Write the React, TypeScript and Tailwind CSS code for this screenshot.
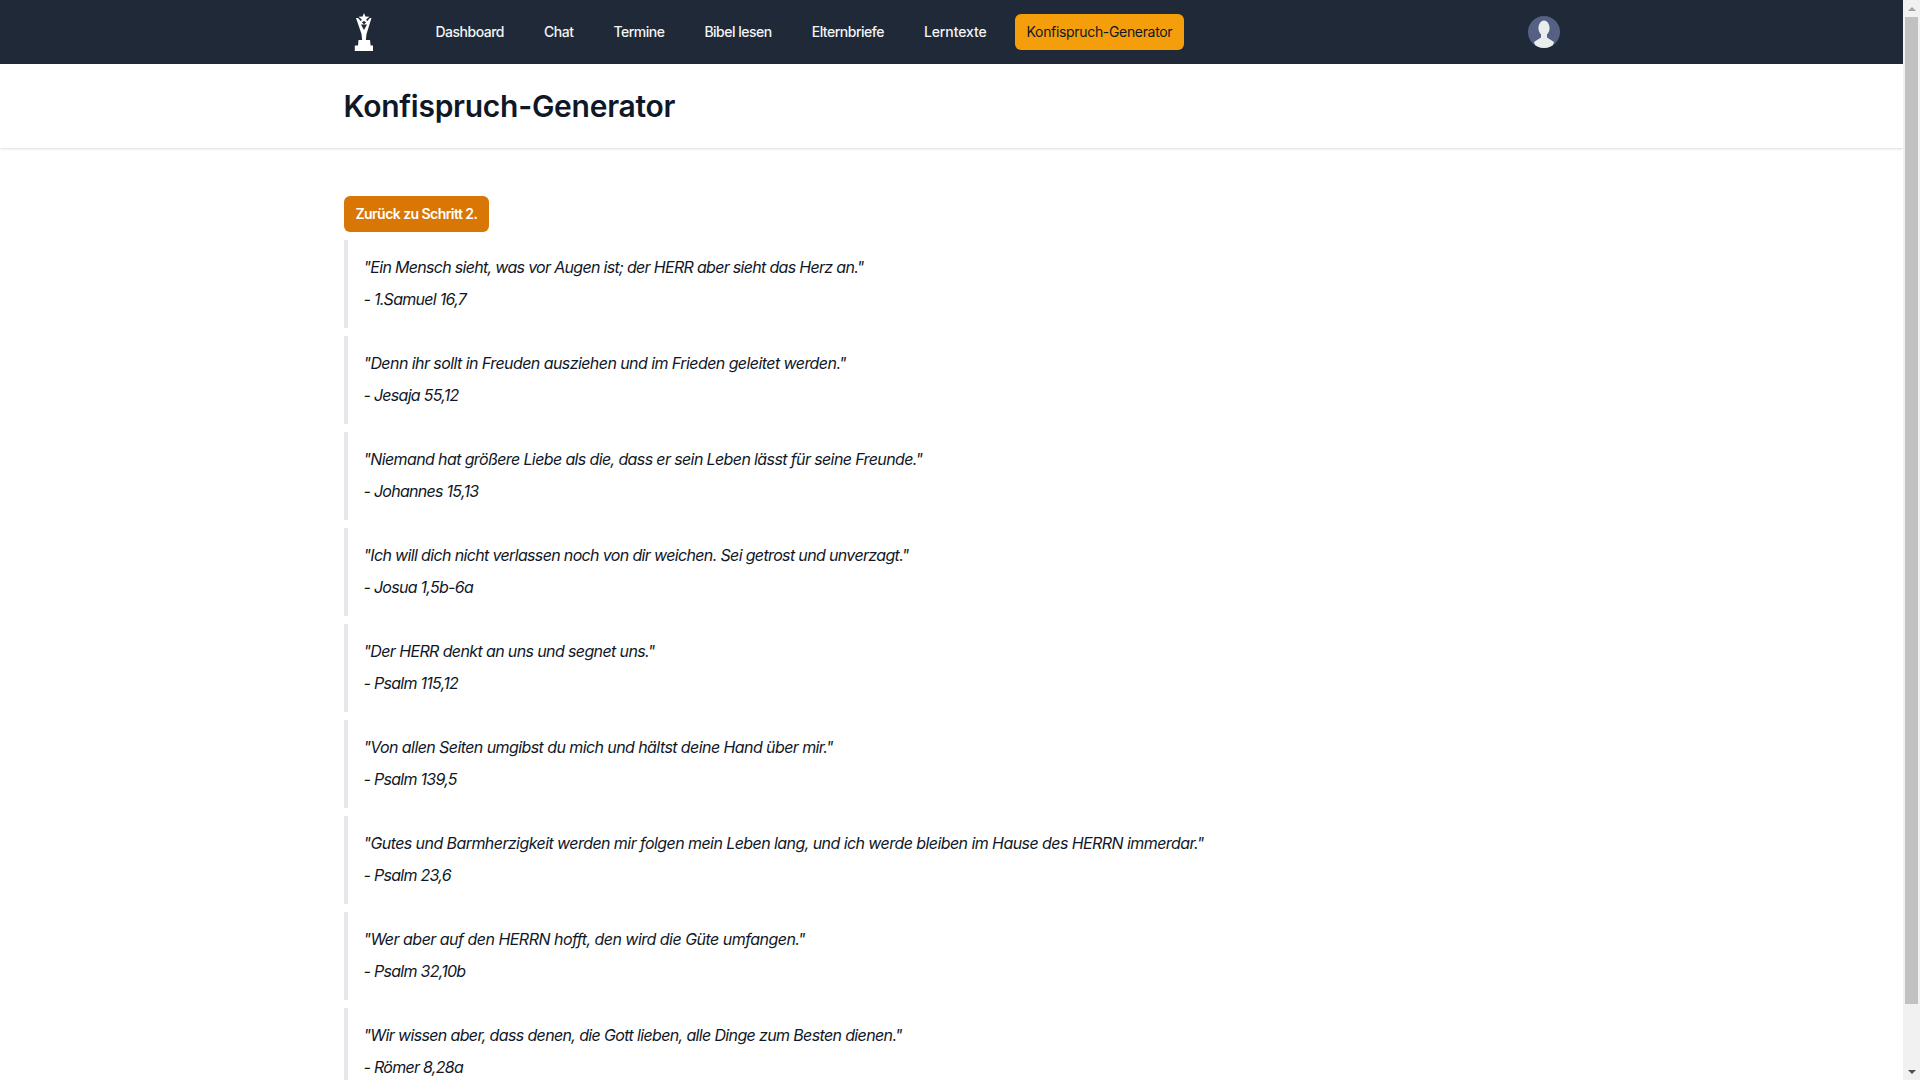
import React from 'react';

const links = [
  { label: 'Dashboard', className: 'text-gray-100 font-medium tracking-[-0.5px]' },
  { label: 'Chat', className: 'text-gray-100 font-medium tracking-[-0.5px]' },
  { label: 'Termine', className: 'text-gray-100 font-medium tracking-[-0.5px]' },
  { label: 'Bibel lesen', className: 'text-gray-100 font-medium tracking-[-0.5px]' },
  { label: 'Elternbriefe', className: 'text-gray-100 font-medium tracking-[-0.5px]' },
  { label: 'Lerntexte', className: 'text-gray-100 font-medium tracking-[-0.1px]' },
  { label: 'Konfispruch-Generator', className: 'bg-[#f59e0b] text-[#111827] font-normal tracking-[-0.33px]' },
];

const verses = [
  { text: '"Ein Mensch sieht, was vor Augen ist; der HERR aber sieht das Herz an."', ref: '- 1.Samuel 16,7', tracking: 'tracking-[-0.69px]' },
  { text: '"Denn ihr sollt in Freuden ausziehen und im Frieden geleitet werden."', ref: '- Jesaja 55,12', tracking: 'tracking-[-0.57px]' },
  { text: '"Niemand hat größere Liebe als die, dass er sein Leben lässt für seine Freunde."', ref: '- Johannes 15,13', tracking: 'tracking-[-0.62px]' },
  { text: '"Ich will dich nicht verlassen noch von dir weichen. Sei getrost und unverzagt."', ref: '- Josua 1,5b-6a', tracking: 'tracking-[-0.65px]' },
  { text: '"Der HERR denkt an uns und segnet uns."', ref: '- Psalm 115,12', tracking: 'tracking-[-0.62px]' },
  { text: '"Von allen Seiten umgibst du mich und hältst deine Hand über mir."', ref: '- Psalm 139,5', tracking: 'tracking-[-0.58px]' },
  { text: '"Gutes und Barmherzigkeit werden mir folgen mein Leben lang, und ich werde bleiben im Hause des HERRN immerdar."', ref: '- Psalm 23,6', tracking: 'tracking-[-0.57px]' },
  { text: '"Wer aber auf den HERRN hofft, den wird die Güte umfangen."', ref: '- Psalm 32,10b', tracking: 'tracking-[-0.52px]' },
  { text: '"Wir wissen aber, dass denen, die Gott lieben, alle Dinge zum Besten dienen."', ref: '- Römer 8,28a', tracking: 'tracking-[-0.64px]' },
];

const Logo = () => (
  <svg viewBox="0 0 40 40" className="w-10 h-10 shrink-0">
    <polygon fill="#fff" points="20,1 21.4,4.6 25.5,4.8 22.3,7.2 23.4,11 20,8.9 16.6,11 17.7,7.2 14.5,4.8 18.6,4.6" />
    <path fill="#fff" d="M12 6 L14 6 L20 12.5 L26 6 L27.5 6 L22.5 22 L21.8 28.5 L18.2 28.5 L17.5 22 Z" />
    <path fill="#1f2937" d="M17 12.5 H23 L20 18 Z" />
    <path fill="#fff" d="M14.5 28 H26 L26.6 33.5 H29 V39 H10.8 V33.5 H14 Z" />
  </svg>
);

const Avatar = () => (
  <svg viewBox="0 0 32 32" className="w-8 h-8 rounded-full">
    <rect width="32" height="32" fill="#566082" />
    <ellipse cx="16" cy="12" rx="5.6" ry="7.5" fill="#e8eded" />
    <path fill="#e8eded" d="M13 17 H19 V21.5 L26 26 L24 32 H8 L6 26 L13 21.5 Z" />
  </svg>
);

const Scrollbar = () => (
  <div className="w-[17px] h-screen shrink-0 bg-[#f1f1f1] flex flex-col items-center">
    <div className="h-[17px] flex items-center justify-center">
      <div className="w-0 h-0 border-x-[4px] border-x-transparent border-b-[4px] border-b-[#a3a3a3]" />
    </div>
    <div className="w-[13px] h-[987px] bg-[#c1c1c1]" />
    <div className="flex-1 flex items-end justify-center pb-[6px]">
      <div className="w-0 h-0 border-x-[4px] border-x-transparent border-t-[4px] border-t-[#505050]" />
    </div>
  </div>
);

export default function App() {
  return (
    <div className="flex h-screen overflow-hidden bg-white font-[Inter,sans-serif]">
      <div className="flex-1 min-w-0">
        <nav className="bg-[#1f2937] h-16">
          <div className="max-w-7xl mx-auto px-8 h-full flex items-center justify-between">
            <div className="flex items-center">
              <Logo />
              <div className="ml-10 flex items-center gap-4">
                {links.map((link) => (
                  <a key={link.label} className={`px-3 py-2 rounded-md text-sm ${link.className}`}>
                    {link.label}
                  </a>
                ))}
              </div>
            </div>
            <Avatar />
          </div>
        </nav>

        <header className="bg-white shadow-sm">
          <div className="max-w-7xl mx-auto px-8 py-6">
            <h1 className="text-3xl font-semibold text-gray-900 tracking-[-0.26px]">Konfispruch-Generator</h1>
          </div>
        </header>

        <main className="max-w-7xl mx-auto px-8 py-12">
          <button className="h-9 px-3 rounded-md bg-[#d97706] text-white text-sm font-semibold tracking-[-0.55px]">
            Zurück zu Schritt 2.
          </button>
          <div className="mt-2 flex flex-col gap-2">
            {verses.map((verse) => (
              <blockquote key={verse.ref} className="border-l-4 border-gray-200 pl-4 pt-[15px] pb-[17px] flex flex-col gap-2 italic text-gray-900">
                <p className={verse.tracking}>{verse.text}</p>
                <p className="tracking-[-0.72px]">{verse.ref}</p>
              </blockquote>
            ))}
          </div>
        </main>
      </div>
      <Scrollbar />
    </div>
  );
}
